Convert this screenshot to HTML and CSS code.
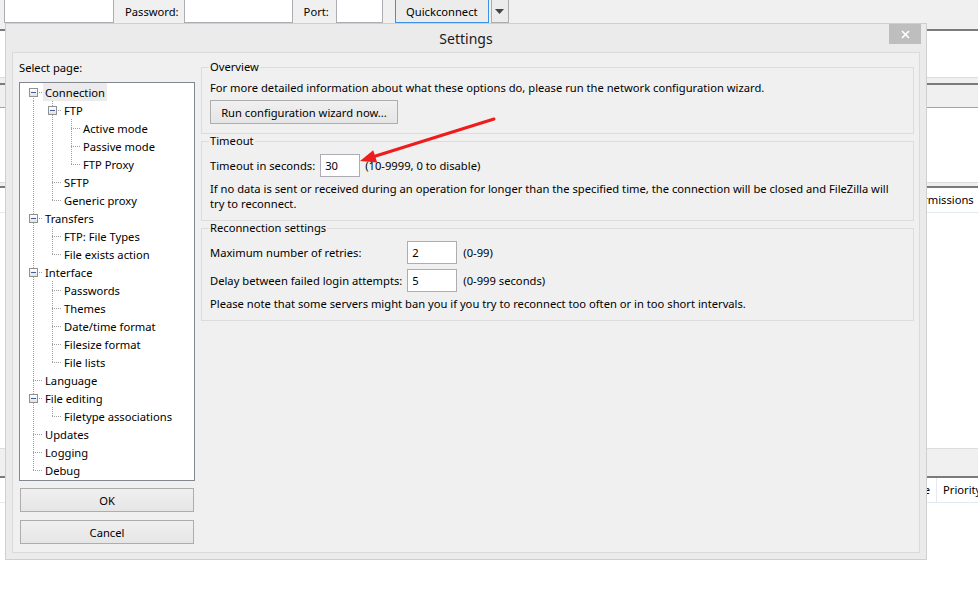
FILE: index.html
```html
<!DOCTYPE html>
<html lang="en">
  <head>
    <meta charset="UTF-8" />
    <title>FileZilla - Settings</title>
    <link rel="stylesheet" href="styles.css">
  </head>
  <body>
    <!-- main window behind the dialog -->
    <div class="main">
      <div class="toolbar">
        <input type="text" class="field host" />
        <label class="tlabel" for="pass">Password:</label>
        <input type="password" id="pass" class="field pass" />
        <label class="tlabel port-label" for="port">Port:</label>
        <input type="text" id="port" class="field port" />
        <button class="qc">Quickconnect</button>
        <button class="qc-menu">
          <svg width="9" height="5" viewBox="0 0 9 5"><path d="M0 0h9L4.5 5z" fill="#444" /></svg>
        </button>
      </div>
      <div class="log"></div>
      <div class="split"></div>
      <div class="pathbar"></div>
      <div class="dirtree"></div>
      <div class="split thin"></div>
      <div class="listhead">
        <span class="hc w-lead"></span>
        <span class="hc w-perm">Permissions</span>
        <span class="hc w-owner">Owner/Group</span>
      </div>
      <div class="filelist"></div>
      <div class="statusbar"></div>
      <div class="split thin"></div>
      <div class="listhead queue">
        <span class="hc q-lead"></span>
        <span class="hc q-size right">Size</span>
        <span class="hc q-prio">Priority</span>
        <span class="hc q-status">Status</span>
      </div>
    </div>

    <!-- Settings dialog -->
    <div class="dialog">
      <div class="titlebar">
        <span></span>
        <span class="title">Settings</span>
        <button class="close">
          <svg width="9" height="9" viewBox="0 0 9 9"><path d="M1 1L8 8M8 1L1 8" stroke="#fff" stroke-width="1.7" /></svg>
        </button>
      </div>

      <div class="client">
        <div class="pages">
          <div class="pages-label">Select page:</div>
          <div class="tree">
            <div class="row"><span class="g first"><i class="exp"></i></span><span class="lbl sel">Connection</span></div>
            <div class="row"><span class="g pipe"></span><span class="g tee"><i class="exp"></i></span><span class="lbl">FTP</span></div>
            <div class="row"><span class="g pipe"></span><span class="g pipe"></span><span class="g tee"></span><span class="lbl">Active mode</span></div>
            <div class="row"><span class="g pipe"></span><span class="g pipe"></span><span class="g tee"></span><span class="lbl">Passive mode</span></div>
            <div class="row"><span class="g pipe"></span><span class="g pipe"></span><span class="g elbow"></span><span class="lbl">FTP Proxy</span></div>
            <div class="row"><span class="g pipe"></span><span class="g tee"></span><span class="lbl">SFTP</span></div>
            <div class="row"><span class="g pipe"></span><span class="g elbow"></span><span class="lbl">Generic proxy</span></div>
            <div class="row"><span class="g tee"><i class="exp"></i></span><span class="lbl">Transfers</span></div>
            <div class="row"><span class="g pipe"></span><span class="g tee"></span><span class="lbl">FTP: File Types</span></div>
            <div class="row"><span class="g pipe"></span><span class="g elbow"></span><span class="lbl">File exists action</span></div>
            <div class="row"><span class="g tee"><i class="exp"></i></span><span class="lbl">Interface</span></div>
            <div class="row"><span class="g pipe"></span><span class="g tee"></span><span class="lbl">Passwords</span></div>
            <div class="row"><span class="g pipe"></span><span class="g tee"></span><span class="lbl">Themes</span></div>
            <div class="row"><span class="g pipe"></span><span class="g tee"></span><span class="lbl">Date/time format</span></div>
            <div class="row"><span class="g pipe"></span><span class="g tee"></span><span class="lbl">Filesize format</span></div>
            <div class="row"><span class="g pipe"></span><span class="g elbow"></span><span class="lbl">File lists</span></div>
            <div class="row"><span class="g tee"></span><span class="lbl">Language</span></div>
            <div class="row"><span class="g tee"><i class="exp"></i></span><span class="lbl">File editing</span></div>
            <div class="row"><span class="g pipe"></span><span class="g elbow"></span><span class="lbl">Filetype associations</span></div>
            <div class="row"><span class="g tee"></span><span class="lbl">Updates</span></div>
            <div class="row"><span class="g tee"></span><span class="lbl">Logging</span></div>
            <div class="row"><span class="g elbow"></span><span class="lbl">Debug</span></div>
          </div>
          <button class="btn side">OK</button>
          <button class="btn side">Cancel</button>
        </div>

        <div class="panel">
          <fieldset class="group">
            <legend>Overview</legend>
            <p class="note first-line">For more detailed information about what these options do, please run the network configuration wizard.</p>
            <button class="btn wizard">Run configuration wizard now...</button>
          </fieldset>

          <fieldset class="group">
            <legend>Timeout</legend>
            <div class="field-row">
              <label for="timeout">Timeout in seconds:</label>
              <input type="text" id="timeout" class="num short" value="30" />
              <span>(10-9999, 0 to disable)</span>
            </div>
            <p class="note">If no data is sent or received during an operation for longer than the specified time, the connection will be closed and FileZilla will<br>try to reconnect.</p>
          </fieldset>

          <fieldset class="group">
            <legend>Reconnection settings</legend>
            <div class="field-grid">
              <label for="retries">Maximum number of retries:</label>
              <input type="text" id="retries" class="num" value="2" />
              <span class="hint">(0-99)</span>
              <label for="delay">Delay between failed login attempts:</label>
              <input type="text" id="delay" class="num" value="5" />
              <span class="hint">(0-999 seconds)</span>
            </div>
            <p class="note">Please note that some servers might ban you if you try to reconnect too often or in too short intervals.</p>
          </fieldset>
        </div>
      </div>
    </div>

    <!-- red call-out arrow pointing at the timeout box -->
    <svg class="callout" width="978" height="601" viewBox="0 0 978 601">
      <line x1="494" y1="119" x2="374" y2="156.5" stroke="#ee1c1c" stroke-width="3" stroke-linecap="round" />
      <path d="M360 161L373.2 150.3L377.2 162.6Z" fill="#ee1c1c" />
    </svg>
  </body>
</html>
```

FILE: styles.css
```css
body {
  margin: 0;
  width: 978px;
  height: 601px;
  overflow: hidden;
  position: relative;
  font-family: "Noto Sans", "Open Sans", sans-serif;
  font-size: 11.2px;
  color: #000;
  background: #fff;
}
button,
input {
  font-family: inherit;
  font-size: 11.2px;
  color: #000;
}

/* ---- main window ---- */
.toolbar {
  display: flex;
  align-items: flex-start;
  height: 29px;
  padding-left: 4px;
  background: #f0f0f0;
}
.field {
  box-sizing: border-box;
  height: 24px;
  margin: -1px 0 0;
  border: 1px solid #abadb3;
  background: #fff;
}
.host {
  width: 110px;
}
.pass {
  width: 109px;
}
.port {
  width: 47px;
}
.tlabel {
  margin: 0 5px 0 11px;
  line-height: 23px;
}
.port-label {
  margin-right: 7px;
}
.qc {
  box-sizing: border-box;
  width: 94px;
  height: 24px;
  margin: -1px 0 0 12px;
  border: 1px solid #3c93e6;
  background: #ececec;
  padding: 0;
}
.qc-menu {
  box-sizing: border-box;
  width: 18px;
  height: 24px;
  margin: -1px 0 0 2px;
  border: 1px solid #acacac;
  background: #ececec;
  padding: 0;
  display: flex;
  align-items: center;
  justify-content: center;
}
.log {
  height: 46px;
  border-top: 2px solid #7b7b7b;
  border-bottom: 1px solid #dcdcdc;
}
.split {
  height: 5px;
  background: #f0f0f0;
}
.split.thin {
  height: 3px;
}
.pathbar {
  height: 22px;
  border-top: 2px solid #7b7b7b;
  border-bottom: 1px solid #a3a3a3;
  background: #f0f0f0;
}
.dirtree {
  height: 74px;
  border-bottom: 1px solid #dcdcdc;
}
.listhead {
  display: flex;
  height: 24px;
  border-top: 2px solid #7b7b7b;
  border-bottom: 1px solid #e3e9f1;
  white-space: nowrap;
}
.hc {
  flex: none;
  box-sizing: border-box;
  padding: 0 6px;
  line-height: 24px;
  border-right: 1px solid #e3e9f1;
  overflow: hidden;
}
.hc.right {
  text-align: right;
}
.w-lead {
  width: 904px;
}
.w-perm {
  width: 80px;
}
.w-owner {
  width: 100px;
}
.q-lead {
  width: 880px;
}
.q-size {
  width: 57px;
}
.q-prio {
  width: 60px;
}
.q-status {
  width: 200px;
}
.filelist {
  height: 235px;
  border-bottom: 1px solid #dcdcdc;
}
.statusbar {
  height: 24px;
  background: #f0f0f0;
}

/* ---- dialog ---- */
.dialog {
  position: absolute;
  left: 5px;
  top: 23px;
  width: 922px;
  height: 537px;
  box-sizing: border-box;
  padding: 0 6px 6px;
  border: 1px solid #cfcfcf;
  background: #ebebeb;
  display: flex;
  flex-direction: column;
}
.titlebar {
  display: grid;
  grid-template-columns: 1fr auto 1fr;
  height: 28px;
  flex: none;
}
.title {
  font-size: 14px;
  line-height: 29px;
  color: #1a1a1a;
}
.close {
  justify-self: end;
  width: 32px;
  height: 20px;
  margin-right: -1px;
  padding: 0;
  border: none;
  background: #bebebe;
  display: flex;
  align-items: center;
  justify-content: center;
}
.client {
  flex: 1;
  display: grid;
  grid-template-columns: 176px minmax(0, 1fr);
  gap: 6px;
  align-items: start;
  padding: 7px 5px 0 6px;
  border: 1px solid #dadada;
  background: #f0f0f0;
}
.pages {
  display: flex;
  flex-direction: column;
}
.pages-label {
  line-height: 16px;
  margin-bottom: 6px;
}

/* page tree */
.tree {
  --vdots: repeating-linear-gradient(to bottom, #a0a0a0 0 1px, transparent 1px 2px);
  --hdots: repeating-linear-gradient(to right, #a0a0a0 0 1px, transparent 1px 2px);
  border: 1px solid #828790;
  background: #fff;
  padding: 0 0 1px 4px;
}
.row {
  display: flex;
  height: 18px;
}
.g {
  flex: none;
  width: 19px;
  height: 18px;
  background-repeat: no-repeat;
}
.pipe {
  background-image: var(--vdots);
  background-size: 1px 18px;
  background-position: 9px 0;
}
.tee {
  background-image: var(--vdots), var(--hdots);
  background-size: 1px 18px, 10px 1px;
  background-position: 9px 0, 9px 9px;
}
.elbow {
  background-image: var(--vdots), var(--hdots);
  background-size: 1px 10px, 10px 1px;
  background-position: 9px 0, 9px 9px;
}
.first {
  background-image: var(--vdots), var(--hdots);
  background-size: 1px 9px, 10px 1px;
  background-position: 9px 9px, 9px 9px;
}
.exp {
  display: block;
  box-sizing: border-box;
  width: 9px;
  height: 9px;
  margin: 5px 0 0 5px;
  border: 1px solid #919191;
  background: linear-gradient(#3f5f98, #3f5f98) center / 5px 1px no-repeat,
    linear-gradient(#fff, #e2e2e2);
}
.lbl {
  padding: 0 2px;
  line-height: 19px;
  white-space: nowrap;
}
.lbl.sel {
  background: #ebebeb;
}

/* buttons */
.btn {
  box-sizing: border-box;
  height: 24px;
  padding: 0;
  border: 1px solid #adadad;
  background: linear-gradient(#f0f0f0, #e5e5e5);
}
.side {
  width: 174px;
  margin: 7px 0 0 1px;
}
.side + .side {
  margin-top: 8px;
}
.wizard {
  display: block;
  width: 188px;
  margin: 5px 0 0 0;
}

/* option groups */
.panel {
  display: flex;
  flex-direction: column;
}
.group {
  margin: 0;
  min-width: 0;
  border: 1px solid #dcdcdc;
  padding: 0 8px 9px;
}
.group legend {
  padding: 0 1px;
  margin-left: -1px;
  line-height: 14px;
}
.note {
  margin: 4px 0 0;
  line-height: 15px;
  white-space: nowrap;
}
.note.first-line {
  margin-top: 6px;
}
.field-row {
  display: flex;
  align-items: center;
  gap: 5px;
  margin-top: 6px;
}
.field-grid {
  display: grid;
  grid-template-columns: auto 50px auto;
  justify-content: start;
  align-items: center;
  column-gap: 5px;
  row-gap: 5px;
  margin-top: 6px;
}
.hint {
  margin-left: 1px;
}
.num {
  box-sizing: border-box;
  width: 50px;
  height: 23px;
  margin: 0;
  padding: 0 4px;
  border: 1px solid #abadb3;
  background: #fff;
}
.num.short {
  width: 40px;
}

.callout {
  position: absolute;
  left: 0;
  top: 0;
  pointer-events: none;
}
```
